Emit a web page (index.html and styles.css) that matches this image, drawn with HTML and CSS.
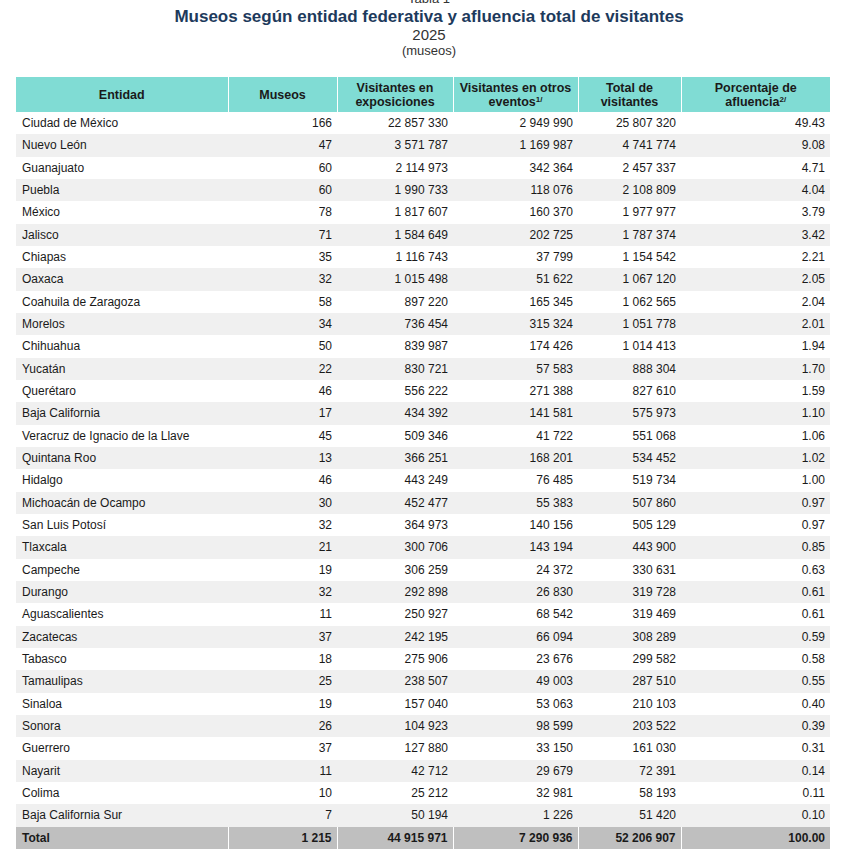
FILE: index.html
```html
<!DOCTYPE html>
<html lang="es">
<head>
<meta charset="utf-8">
<title>Museos según entidad federativa</title>
<link rel="stylesheet" href="styles.css">
</head>
<body>
<div class="page">
  <header class="caption">
    <div class="label">Tabla 1</div>
    <h1 class="title">Museos según entidad federativa y afluencia total de visitantes</h1>
    <div class="year">2025</div>
    <div class="unit">(museos)</div>
  </header>
  <table class="data">
    <colgroup>
      <col class="c1"><col class="c2"><col class="c3"><col class="c4"><col class="c5"><col class="c6">
    </colgroup>
    <thead>
      <tr>
        <th>Entidad</th>
        <th>Museos</th>
        <th>Visitantes en<br>exposiciones</th>
        <th>Visitantes en otros<br>eventos<sup>1/</sup></th>
        <th>Total de<br>visitantes</th>
        <th>Porcentaje de<br>afluencia<sup>2/</sup></th>
      </tr>
    </thead>
    <tbody>
      <tr><td>Ciudad de México</td><td>166</td><td>22 857 330</td><td>2 949 990</td><td>25 807 320</td><td>49.43</td></tr>
      <tr><td>Nuevo León</td><td>47</td><td>3 571 787</td><td>1 169 987</td><td>4 741 774</td><td>9.08</td></tr>
      <tr><td>Guanajuato</td><td>60</td><td>2 114 973</td><td>342 364</td><td>2 457 337</td><td>4.71</td></tr>
      <tr><td>Puebla</td><td>60</td><td>1 990 733</td><td>118 076</td><td>2 108 809</td><td>4.04</td></tr>
      <tr><td>México</td><td>78</td><td>1 817 607</td><td>160 370</td><td>1 977 977</td><td>3.79</td></tr>
      <tr><td>Jalisco</td><td>71</td><td>1 584 649</td><td>202 725</td><td>1 787 374</td><td>3.42</td></tr>
      <tr><td>Chiapas</td><td>35</td><td>1 116 743</td><td>37 799</td><td>1 154 542</td><td>2.21</td></tr>
      <tr><td>Oaxaca</td><td>32</td><td>1 015 498</td><td>51 622</td><td>1 067 120</td><td>2.05</td></tr>
      <tr><td>Coahuila de Zaragoza</td><td>58</td><td>897 220</td><td>165 345</td><td>1 062 565</td><td>2.04</td></tr>
      <tr><td>Morelos</td><td>34</td><td>736 454</td><td>315 324</td><td>1 051 778</td><td>2.01</td></tr>
      <tr><td>Chihuahua</td><td>50</td><td>839 987</td><td>174 426</td><td>1 014 413</td><td>1.94</td></tr>
      <tr><td>Yucatán</td><td>22</td><td>830 721</td><td>57 583</td><td>888 304</td><td>1.70</td></tr>
      <tr><td>Querétaro</td><td>46</td><td>556 222</td><td>271 388</td><td>827 610</td><td>1.59</td></tr>
      <tr><td>Baja California</td><td>17</td><td>434 392</td><td>141 581</td><td>575 973</td><td>1.10</td></tr>
      <tr><td>Veracruz de Ignacio de la Llave</td><td>45</td><td>509 346</td><td>41 722</td><td>551 068</td><td>1.06</td></tr>
      <tr><td>Quintana Roo</td><td>13</td><td>366 251</td><td>168 201</td><td>534 452</td><td>1.02</td></tr>
      <tr><td>Hidalgo</td><td>46</td><td>443 249</td><td>76 485</td><td>519 734</td><td>1.00</td></tr>
      <tr><td>Michoacán de Ocampo</td><td>30</td><td>452 477</td><td>55 383</td><td>507 860</td><td>0.97</td></tr>
      <tr><td>San Luis Potosí</td><td>32</td><td>364 973</td><td>140 156</td><td>505 129</td><td>0.97</td></tr>
      <tr><td>Tlaxcala</td><td>21</td><td>300 706</td><td>143 194</td><td>443 900</td><td>0.85</td></tr>
      <tr><td>Campeche</td><td>19</td><td>306 259</td><td>24 372</td><td>330 631</td><td>0.63</td></tr>
      <tr><td>Durango</td><td>32</td><td>292 898</td><td>26 830</td><td>319 728</td><td>0.61</td></tr>
      <tr><td>Aguascalientes</td><td>11</td><td>250 927</td><td>68 542</td><td>319 469</td><td>0.61</td></tr>
      <tr><td>Zacatecas</td><td>37</td><td>242 195</td><td>66 094</td><td>308 289</td><td>0.59</td></tr>
      <tr><td>Tabasco</td><td>18</td><td>275 906</td><td>23 676</td><td>299 582</td><td>0.58</td></tr>
      <tr><td>Tamaulipas</td><td>25</td><td>238 507</td><td>49 003</td><td>287 510</td><td>0.55</td></tr>
      <tr><td>Sinaloa</td><td>19</td><td>157 040</td><td>53 063</td><td>210 103</td><td>0.40</td></tr>
      <tr><td>Sonora</td><td>26</td><td>104 923</td><td>98 599</td><td>203 522</td><td>0.39</td></tr>
      <tr><td>Guerrero</td><td>37</td><td>127 880</td><td>33 150</td><td>161 030</td><td>0.31</td></tr>
      <tr><td>Nayarit</td><td>11</td><td>42 712</td><td>29 679</td><td>72 391</td><td>0.14</td></tr>
      <tr><td>Colima</td><td>10</td><td>25 212</td><td>32 981</td><td>58 193</td><td>0.11</td></tr>
      <tr><td>Baja California Sur</td><td>7</td><td>50 194</td><td>1 226</td><td>51 420</td><td>0.10</td></tr>
    </tbody>
    <tfoot>
      <tr><td>Total</td><td>1 215</td><td>44 915 971</td><td>7 290 936</td><td>52 206 907</td><td>100.00</td></tr>
    </tfoot>
  </table>
</div>
</body>
</html>
```

FILE: styles.css
```css
* { box-sizing: border-box; }

html, body {
  margin: 0;
  padding: 0;
  background: #ffffff;
}

body {
  font-family: "Liberation Sans", Arial, sans-serif;
  color: #1a1a1a;
}

.page {
  padding: 0 14px 0 16px;
}

.caption {
  text-align: center;
  padding-left: 12px;
  margin-top: -9px;
  height: 86px;
}

.label {
  font-size: 13px;
  line-height: 16px;
  color: #333;
}

.title {
  margin: 0;
  font-size: 17px;
  line-height: 19px;
  font-weight: bold;
  color: #1d3a5c;
}

.year {
  font-size: 15px;
  line-height: 17px;
  color: #333;
}

.unit {
  font-size: 13px;
  line-height: 15px;
  color: #333;
}

.data {
  width: 814px;
  border-collapse: collapse;
  table-layout: fixed;
  font-size: 12px;
}

.c1 { width: 212px; }
.c2 { width: 109px; }
.c3 { width: 116px; }
.c4 { width: 125px; }
.c5 { width: 103px; }
.c6 { width: 149px; }

.data th {
  background: #80dcd4;
  height: 35px;
  padding: 0 3px;
  font-size: 12.5px;
  font-weight: bold;
  line-height: 14px;
  text-align: center;
  vertical-align: middle;
  border-left: 1px solid #ffffff;
  color: #1a1a1a;
}

.data th:first-child {
  border-left: none;
}

.data sup {
  font-size: 8px;
  line-height: 0;
  vertical-align: 4px;
}

.data td {
  height: 22.34px;
  padding: 0 5px 0 6px;
  line-height: 14px;
  text-align: right;
  vertical-align: middle;
  white-space: nowrap;
  color: #1a1a1a;
}

.data td:first-child {
  text-align: left;
}

.data tbody tr:nth-child(even) td {
  background: #f0f0f0;
}

.data tfoot td {
  background: #bfbfbf;
  font-weight: bold;
  border-left: 1px solid #ffffff;
}

.data tfoot td:first-child {
  border-left: none;
}
```
